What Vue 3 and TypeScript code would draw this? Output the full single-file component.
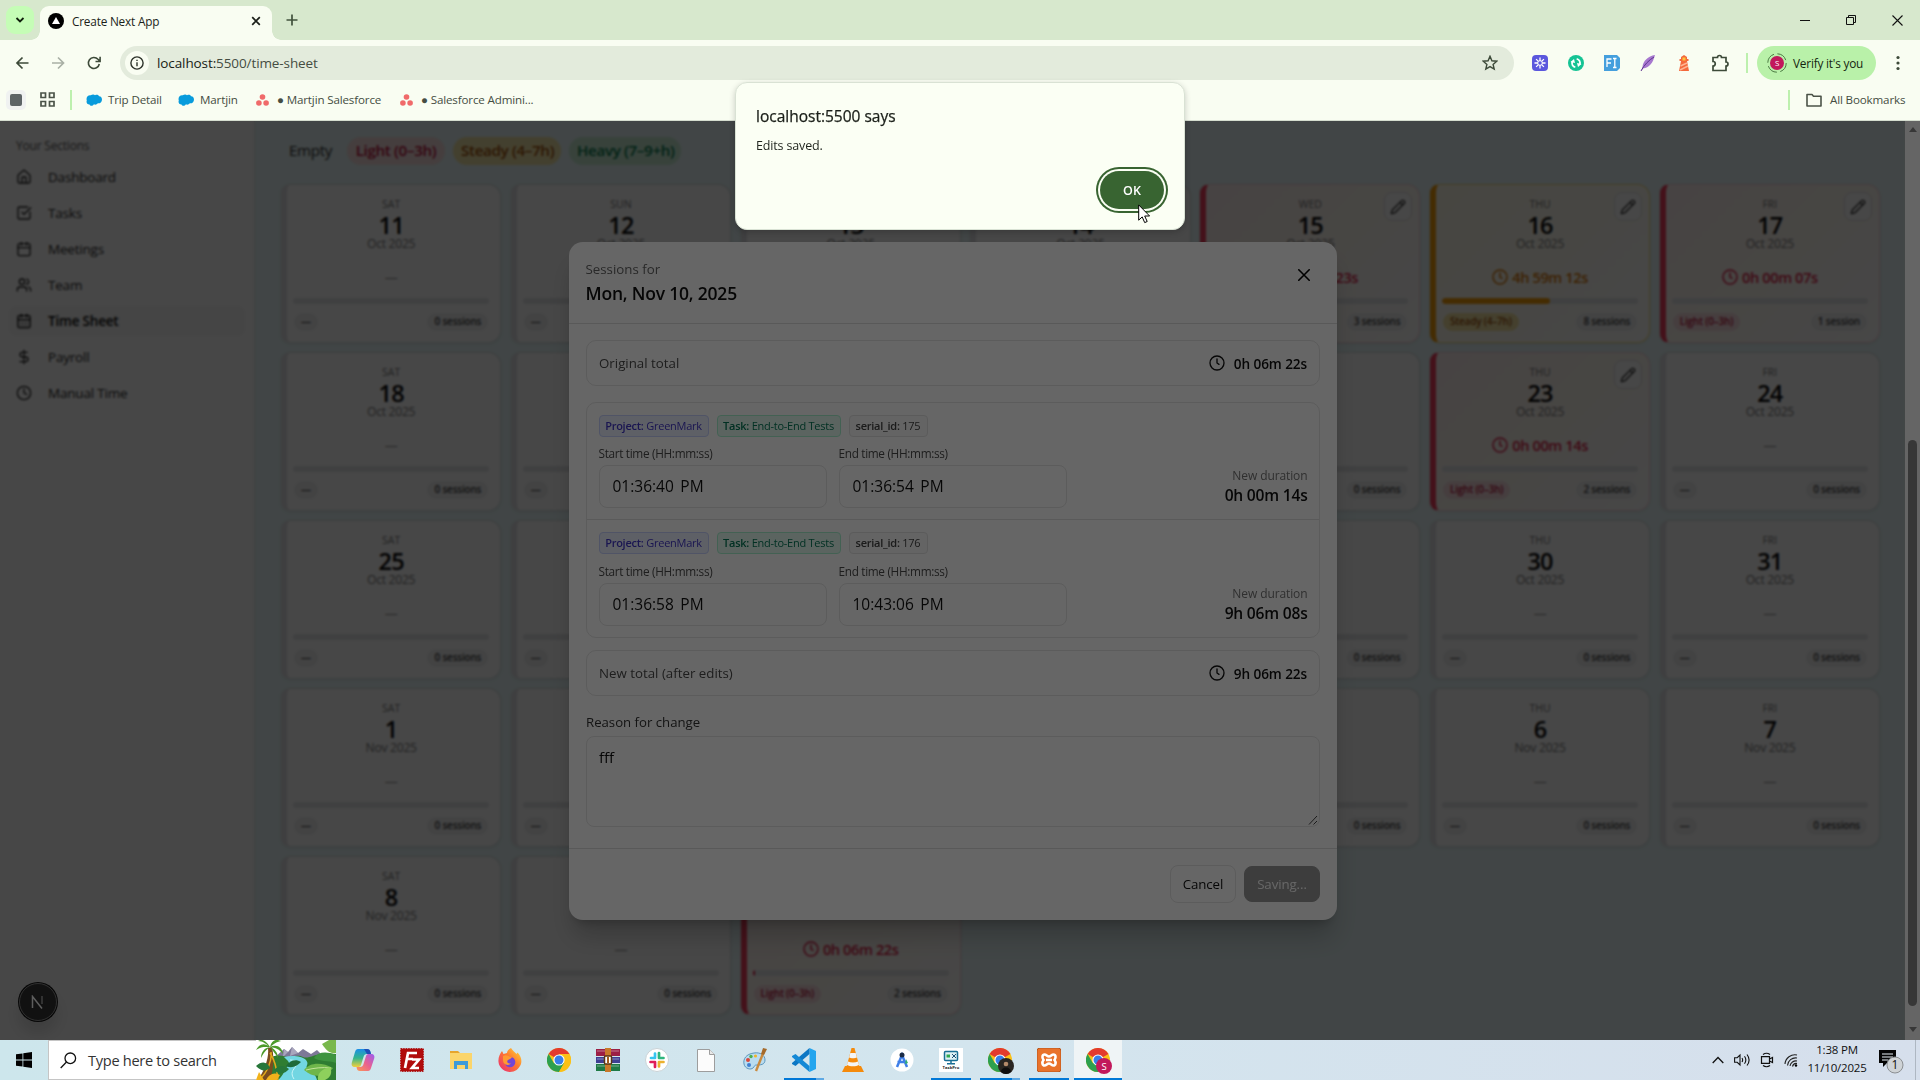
<script setup lang="ts">
type Level = 'empty' | 'light' | 'steady'
type Part = 'dow' | 'num' | 'mon' | 'total' | 'level' | 'sessions'
interface Day {
  dow: string
  num: number
  month: string
  level: Level
  total: string
  pct: number
  sessions: string
}

const names = ['SAT', 'SUN', 'MON', 'TUE', 'WED', 'THU', 'FRI']
const tracked: Record<number, Partial<Day>> = {
  4: { level: 'light', total: '0h 00m 23s', sessions: '3 sessions' },
  5: { level: 'steady', total: '4h 59m 12s', pct: 55, sessions: '8 sessions' },
  6: { level: 'light', total: '0h 00m 07s', sessions: '1 session' },
  12: { level: 'light', total: '0h 00m 14s', sessions: '2 sessions' },
  30: { level: 'light', total: '0h 06m 22s', pct: 1.2, sessions: '2 sessions' },
}
const days: Day[] = Array.from({ length: 31 }, (_, i) => ({
  dow: names[i % 7],
  num: i < 21 ? 11 + i : i - 20,
  month: i < 21 ? 'Oct 2025' : 'Nov 2025',
  level: 'empty' as Level,
  total: '',
  pct: 0,
  sessions: '0 sessions',
  ...tracked[i],
}))
const levelText: Record<Level, string> = { empty: '—', light: 'Light (0–3h)', steady: 'Steady (4–7h)' }

// While the sessions dialog is open, the parts of the grid behind it are skipped.
const shows = (i: number, part: Part): boolean => {
  const row = Math.floor(i / 7)
  const col = i % 7
  if (col < 1 || col > 4) return true
  if (row === 0) {
    if (col === 1) return ['dow', 'num', 'mon', 'level'].includes(part)
    if (col === 4) return part !== 'level'
    return part === 'num' || part === 'mon'
  }
  if (row === 4) return ['total', 'level', 'sessions'].includes(part)
  if (col === 1) return part === 'level'
  return col === 4 && part === 'sessions'
}

const nav = [
  { label: 'Dashboard', paths: ['M15 21v-8a1 1 0 0 0-1-1h-4a1 1 0 0 0-1 1v8', 'M3 10a2 2 0 0 1 .7-1.5l7-6a2 2 0 0 1 2.6 0l7 6A2 2 0 0 1 21 10v9a2 2 0 0 1-2 2H5a2 2 0 0 1-2-2z'] },
  { label: 'Tasks', paths: ['M21 10.5V19a2 2 0 0 1-2 2H5a2 2 0 0 1-2-2V5a2 2 0 0 1 2-2h12.5', 'm9 11 3 3L22 4'] },
  { label: 'Meetings', paths: ['M8 2v4M16 2v4M3 10h18', 'M5 4h14a2 2 0 0 1 2 2v14a2 2 0 0 1-2 2H5a2 2 0 0 1-2-2V6a2 2 0 0 1 2-2z'] },
  { label: 'Team', paths: ['M16 21v-2a4 4 0 0 0-4-4H6a4 4 0 0 0-4 4v2', 'M9 3a4 4 0 1 1 0 8 4 4 0 0 1 0-8z', 'M22 21v-2a4 4 0 0 0-3-3.87M16 3.13a4 4 0 0 1 0 7.75'] },
  { label: 'Time Sheet', active: true, paths: ['M8 2v4M16 2v4M3 10h18', 'M5 4h14a2 2 0 0 1 2 2v14a2 2 0 0 1-2 2H5a2 2 0 0 1-2-2V6a2 2 0 0 1 2-2z', 'M8 14h.01M12 14h.01M16 14h.01M8 18h.01M12 18h.01M16 18h.01'] },
  { label: 'Payroll', paths: ['M12 2v20', 'M17 5H9.5a3.5 3.5 0 0 0 0 7h5a3.5 3.5 0 0 1 0 7H6'] },
  { label: 'Manual Time', paths: ['M12 2a10 10 0 1 1 0 20 10 10 0 0 1 0-20z', 'M12 6v6l4 2'] },
]

const sessions = [
  { id: 175, start: '01:36:40', end: '01:36:54', dur: '0h 00m 14s' },
  { id: 176, start: '01:36:58', end: '10:43:06', dur: '9h 06m 08s' },
]
</script>

<template>
  <div class="screen">
    <div class="tabstrip">
      <div class="tabmenu"><svg width="10" height="8" viewBox="0 0 10 8"><path d="M1.5 2 5 5.5 8.500 2" fill="none" stroke="#10200c" stroke-width="1.8" /></svg></div>
      <div class="tab">
        <svg width="16" height="16" viewBox="0 0 16 16"><circle cx="8" cy="8" r="8" /><path d="M8 4l4 7H4z" fill="#fff" /></svg>
        <span class="tabtitle">Create Next App</span>
        <svg width="10" height="10" viewBox="0 0 10 10"><path d="M1.200 1.200l7.600 7.600M8.800 1.200 1.200 8.800" stroke="#1b1f19" stroke-width="1.700" /></svg>
      </div>
      <svg class="plus" width="12" height="12" viewBox="0 0 12 12"><path d="M6 .5v11M.5 6h11" stroke="#41513c" stroke-width="1.700" /></svg>
      <div class="winctl">
        <svg width="10" height="10" viewBox="0 0 10 10"><path d="M0 5.500h10" stroke="#111" /></svg>
        <svg width="10" height="10" viewBox="0 0 10 10"><path d="M.5 2.500h7v7h-7zM2.500 2.500v-2h7v7h-2" fill="none" stroke="#111" /></svg>
        <svg width="11" height="11" viewBox="0 0 11 11"><path d="M.5.5l10 10M10.500.5l-10 10" stroke="#111" stroke-width="1.100" /></svg>
      </div>
    </div>

    <div class="toolbar">
      <svg class="tb" width="14" height="14" viewBox="0 0 14 14"><path d="M13.500 7H2M7.500 1.500 2 7l5.500 5.500" fill="none" stroke="#3d4a39" stroke-width="1.700" /></svg>
      <svg class="tb" width="14" height="14" viewBox="0 0 14 14"><path d="M1 7h11.500M7 1.500 12.500 7 7 12.500" fill="none" stroke="#a9b0a5" stroke-width="1.700" /></svg>
      <svg class="tb" width="14" height="14" viewBox="0 0 14 14"><path d="M12.300 8A5.500 5.500 0 1 1 11 3.300L13 5.300M13.100.8v4.700H8.500" fill="none" stroke="#3d4a39" stroke-width="1.600" /></svg>
      <div class="omni">
        <div class="info"><svg width="14" height="14" viewBox="0 0 14 14"><circle cx="7" cy="7" r="6.100" fill="none" stroke="#2d332a" stroke-width="1.400" /><path d="M7 6.200v4M7 3.700v1.400" stroke="#2d332a" stroke-width="1.400" /></svg></div>
        <span class="url"><b>localhost:</b>5500/time-sheet</span>
        <svg width="16" height="16" viewBox="0 0 16 16"><path d="M8 1.300l1.900 4.500 4.900.4-3.700 3.200 1.100 4.700L8 11.600l-4.200 2.500 1.100-4.700L1.200 6.200l4.900-.4z" fill="none" stroke="#3d4a39" stroke-width="1.400" /></svg>
      </div>
      <div class="exts">
        <svg width="16" height="16" viewBox="0 0 16 16"><rect width="16" height="16" rx="4" fill="#5b57dd" /><g stroke="#fff" stroke-width="1.300"><path d="M8 2.500v11M2.500 8h11M4.100 4.100l7.800 7.800M11.900 4.100l-7.800 7.800" /></g><circle cx="8" cy="8" r="2.300" fill="#5b57dd" stroke="#fff" /></svg>
        <svg width="16" height="16" viewBox="0 0 16 16"><circle cx="8" cy="8" r="8" fill="#15c394" /><path d="M7.300 12.200A4.200 4.200 0 0 1 4.300 6.500M8.700 3.800a4.200 4.200 0 0 1 3 5.700" fill="none" stroke="#fff" stroke-width="1.800" /><path d="M2.500 7l3.500-3 1 4zM13.500 9l-3.500 3-1-4z" fill="#fff" /></svg>
        <svg width="16" height="16" viewBox="0 0 16 16"><path d="M0 0h13l3 3v10l-3 3H0z" fill="#459fdd" /><path d="M3 12V4h4.500M3 8h4M9 3.500h3.500M9 12.500h3.500M10.800 3.500v9" fill="none" stroke="#fff" stroke-width="1.300" /></svg>
        <svg width="16" height="16" viewBox="0 0 16 16"><path d="M15 0C8 1 3 6 2.500 12L1 16l2-2.500C9 13 13 8 15 0z" fill="#a778cf" /><path d="M1 16C4 10 9 5 14 2" stroke="#5f3590" fill="none" /></svg>
        <svg width="16" height="16" viewBox="0 0 16 16"><path d="M5 2l3-2 3 2v2h1.500v2H11l2 10H3l2-10H3.500V4H5z" fill="#f4693c" /><path d="M6.500 2.500h3v3h-3z" fill="#ffc63c" /><path d="M4.500 11l6.500-3M4 15l8-4" stroke="#ffb493" stroke-width="1.500" /></svg>
        <svg width="17" height="18" viewBox="0 0 17 18"><path d="M1 3.500h4.500a2 2 0 0 1 4 0H14V8a2 2 0 0 1 0 4v4.500H1V12a2 2 0 0 0 0-4.500z" fill="none" stroke="#3d4a39" stroke-width="1.700" /></svg>
      </div>
      <i class="vsep ext-sep"></i>
      <div class="verify">
        <svg width="20" height="20" viewBox="0 0 20 20"><circle cx="10" cy="10" r="9.200" fill="none" stroke="#4a7a42" stroke-dasharray="11 3.500" /><circle cx="10" cy="10" r="7" fill="#c2185b" /><text x="10" y="13" text-anchor="middle" font-size="8" fill="#fff" font-family="Open Sans, sans-serif">S</text></svg>
        <span>Verify it's you</span>
      </div>
      <svg class="dots" width="4" height="16" viewBox="0 0 4 16"><g fill="#3d4a39"><circle cx="2" cy="2.500" r="1.600" /><circle cx="2" cy="8" r="1.600" /><circle cx="2" cy="13.500" r="1.600" /></g></svg>
    </div>

    <div class="bookmarks">
      <div class="sq"><i></i></div>
      <svg class="apps" width="15" height="15" viewBox="0 0 15 15"><path d="M1 1h4.500v4.500H1zM9.500 1H14v4.500H9.500zM1 9.500h4.500V14H1zM9.500 9.500H14V14H9.500z" fill="none" stroke="#4b5348" stroke-width="1.700" /></svg>
      <i class="vsep bm-sep"></i>
      <div class="bm b1"><svg width="16" height="12" viewBox="0 0 16 12"><path d="M3.500 10.500C1 10.500 0 8.500.8 6.500-.3 3.500 2 .8 4.800 1.300 6 .3 8 0 9 1.300c2-1 3.500-.3 4 .9C15.500 2 16.500 5 15.700 7c-.6 2-2.400 2.700-4 2.200-1 1.500-2.600 1.800-3.800 1-1.200 2-3.700 2-4.400.3z" fill="#089bdc" /></svg><span>Trip Detail</span></div>
      <div class="bm b2"><svg width="16" height="12" viewBox="0 0 16 12"><path d="M3.500 10.500C1 10.500 0 8.500.8 6.500-.3 3.500 2 .8 4.800 1.300 6 .3 8 0 9 1.300c2-1 3.500-.3 4 .9C15.500 2 16.500 5 15.700 7c-.6 2-2.400 2.700-4 2.200-1 1.500-2.600 1.800-3.800 1-1.200 2-3.700 2-4.400.3z" fill="#089bdc" /></svg><span>Martjin</span></div>
      <div class="bm b3"><svg width="13" height="12" viewBox="0 0 13 12"><g fill="#f06a6a"><circle cx="6.500" cy="3" r="2.800" /><circle cx="2.900" cy="9" r="2.800" /><circle cx="10.100" cy="9" r="2.800" /></g></svg><span>● Martjin Salesforce</span></div>
      <div class="bm b4"><svg width="13" height="12" viewBox="0 0 13 12"><g fill="#f06a6a"><circle cx="6.500" cy="3" r="2.800" /><circle cx="2.900" cy="9" r="2.800" /><circle cx="10.100" cy="9" r="2.800" /></g></svg><span>● Salesforce Admini...</span></div>
      <i class="vsep all-sep"></i>
      <svg class="folder" width="16" height="14" viewBox="0 0 16 14"><path d="M1 1.500h5l1.500 1.700H15V13H1z" fill="none" stroke="#4b5348" stroke-width="1.600" stroke-linejoin="round" /></svg>
      <span class="alltext">All Bookmarks</span>
    </div>

    <div class="viewport">
      <div class="page">
        <aside>
          <div class="sechead">Your Sections</div>
          <div v-for="n in nav" :key="n.label" class="navitem" :class="{ active: n.active }">
            <svg width="16" height="16" viewBox="0 0 24 24" fill="none" stroke="currentColor" stroke-width="2" stroke-linecap="round" stroke-linejoin="round"><path v-for="p in n.paths" :key="p" :d="p" /></svg>
            <span>{{ n.label }}</span>
          </div>
        </aside>
        <main>
          <div class="legend">
            <span class="lg l-empty">Empty</span><span class="lg l-light">Light (0–3h)</span><span class="lg l-steady">Steady (4–7h)</span><span class="lg l-heavy">Heavy (7–9+h)</span>
          </div>
          <div class="grid">
            <div v-for="(d, i) in days" :key="i" class="card" :class="d.level">
              <div class="dow"><span v-if="shows(i, 'dow')">{{ d.dow }}</span></div>
              <div class="num"><span v-if="shows(i, 'num')">{{ d.num }}</span></div>
              <div class="mon"><span v-if="shows(i, 'mon')">{{ d.month }}</span></div>
              <div v-if="d.total" class="total">
                <svg width="16" height="16" viewBox="0 0 24 24" fill="none" stroke="currentColor" stroke-width="2.200" stroke-linecap="round"><circle cx="12" cy="12" r="10.500" /><path d="M12 6v6l3 2" /></svg>
                <span>{{ d.total }}</span>
              </div>
              <div v-else class="total none"><span v-if="shows(i, 'total')">—</span></div>
              <div class="bar"><i :style="{ width: d.pct + '%' }"></i></div>
              <div class="foot">
                <span v-if="shows(i, 'level')" class="pill lvl">{{ levelText[d.level] }}</span>
                <span v-if="shows(i, 'sessions')" class="pill count">{{ d.sessions }}</span>
              </div>
              <div v-if="d.total" class="edit"><svg width="16" height="16" viewBox="0 0 24 24" fill="none" stroke="#333" stroke-width="2" stroke-linejoin="round"><path d="M21.200 6.800a1 1 0 0 0-4-4L3.800 16.200a2 2 0 0 0-.5.8L2 21.400a.5.5 0 0 0 .6.6l4.400-1.300a2 2 0 0 0 .8-.5zM15 5l4 4" /></svg></div>
            </div>
          </div>
        </main>
      </div>
      <div class="scrim"></div>

      <section class="modal">
        <header>
          <div>
            <div class="m-sub">Sessions for</div>
            <div class="m-title">Mon, Nov 10, 2025</div>
          </div>
          <svg width="12" height="12" viewBox="0 0 12 12"><path d="M.8.8l10.400 10.400M11.200.8.8 11.200" stroke="#000" stroke-width="1.600" stroke-linecap="round" /></svg>
        </header>
        <div class="m-body">
          <div class="sumrow">
            <span>Original total</span>
            <b><svg width="16" height="16" viewBox="0 0 24 24" fill="none" stroke="currentColor" stroke-width="2" stroke-linecap="round"><circle cx="12" cy="12" r="10.500" /><path d="M12 6v6l3 2" /></svg><span>0h 06m 22s</span></b>
          </div>
          <div class="sessions">
            <div v-for="s in sessions" :key="s.id" class="session">
              <div class="chips">
                <span class="chip c-proj"><b>Project:</b> GreenMark</span>
                <span class="chip c-task"><b>Task:</b> End-to-End Tests</span>
                <span class="chip c-id"><b>serial_id:</b> {{ s.id }}</span>
              </div>
              <div class="fields">
                <div class="field"><label>Start time (HH:mm:ss)</label><div class="input">{{ s.start }} PM</div></div>
                <div class="field"><label>End time (HH:mm:ss)</label><div class="input">{{ s.end }} PM</div></div>
                <div class="dur"><span>New duration</span><b>{{ s.dur }}</b></div>
              </div>
            </div>
          </div>
          <div class="sumrow new">
            <span>New total (after edits)</span>
            <b><svg width="16" height="16" viewBox="0 0 24 24" fill="none" stroke="currentColor" stroke-width="2" stroke-linecap="round"><circle cx="12" cy="12" r="10.500" /><path d="M12 6v6l3 2" /></svg><span>9h 06m 22s</span></b>
          </div>
          <div class="reason">Reason for change</div>
          <div class="area">fff<svg width="10" height="10" viewBox="0 0 10 10"><path d="M1 9.500 9 1M5.500 9.500 9 6" stroke="#444" fill="none" /></svg></div>
        </div>
        <footer><span class="btn cancel">Cancel</span><span class="btn saving">Saving...</span></footer>
      </section>

      <div class="devbtn"><svg width="14" height="14" viewBox="0 0 14 14"><path d="M1.500 13V1.500L11 13.500" fill="none" stroke="#e8e8e8" stroke-width="1.500" /><path d="M11 1v8" stroke="#999" stroke-width="1.500" /></svg></div>
      <div class="scrollbar"><i class="up"></i><i class="thumb"></i><i class="down"></i></div>
      <div class="dim"></div>
    </div>

    <div class="alert">
      <div class="a-title">localhost:5500 says</div>
      <div class="a-text">Edits saved.</div>
      <div class="a-foot"><div class="ok">OK</div></div>
    </div>
    <svg class="cursor" width="13" height="20" viewBox="0 0 13 20"><path d="M.7.9v15.300l3.500-3.300 2.500 5.700 2.500-1.100-2.500-5.500h4.900z" fill="#fff" stroke="#000" stroke-width="1" /></svg>

    <div class="taskbar">
      <div class="start"><svg width="16" height="16" viewBox="0 0 16 16"><path d="M0 2.300 6.500 1.400V7.600H0zM7.300 1.300 16 0v7.600H7.300zM0 8.400h6.500v6.200L0 13.700zM7.300 8.400H16V16l-8.700-1.300z" /></svg></div>
      <div class="search">
        <svg width="17" height="17" viewBox="0 0 17 17"><circle cx="10.300" cy="6.300" r="5.300" fill="none" stroke="#111" stroke-width="1.300" /><path d="M6.500 10 .7 16" stroke="#111" stroke-width="1.300" /></svg>
        <span>Type here to search</span>
        <svg class="scene" width="80" height="40" viewBox="0 0 80 40">
          <rect width="80" height="40" fill="#fff" />
          <path d="M18 18 28 9l4 3 4-5 6 6 5-4 8 5 6-4 8 8v6H18z" fill="#7d7897" /><path d="M28 9l4 3-5 5zM36 7l6 6-8 3z" fill="#a9a6bd" />
          <path d="M14 18c8-5 15-1 18-1s10-3 15 0 14-6 33-3v26H8z" fill="#2f7d32" />
          <path d="M28 17c8-2 18-1 22 3 4 5-2 6 2 9s8 6 9 11H22c6-5 6-10 10-14 3-3 0-5-4-9z" fill="#72d6e2" /><path d="M34 20c6 0 9 2 6 6s-6 7-2 13" stroke="#c9f5f8" fill="none" />
          <path d="M2 40C10 28 13 16 12 8l4-1c3 14 0 24-1 33z" fill="#7a4c1f" /><path d="M3 40C12 32 16 20 15 12M22 40c-1-10-3-20-8-27" stroke="#e1a91c" stroke-width="1.500" fill="none" />
          <path d="M14 7C8 2 3 4 0 10c6-4 9-3 14-3zM14 7C9-1 5-1 2 1c5 0 8 3 12 6zM14 7c2-8 7-8 11-6-5 1-7 3-11 6zM14 7c7-3 12 0 13 7-4-5-7-6-13-7zM14 7C8 8 5 12 5 18c3-6 5-8 9-11zM14 7c5 2 8 6 8 11-3-5-5-7-8-11z" fill="#4c9a2a" />
          <path d="M30 26c4-6 10-7 15-4-4 4-9 7-15 4z" fill="#1f6a3a" /><path d="M0 26c6-6 12-4 14 2-5 4-9 3-14-2zM18 30c5-5 10-5 15-1-4 5-10 6-15 1z" fill="#27773a" />
          <path d="M48 30c6-8 18-8 29-2-7 9-19 11-29 2z" fill="#6fb64a" /><path d="M50 30c8-2 16-3 25-2" stroke="#c3e49a" fill="none" />
          <path d="M62 40c-1-6 3-11 12-13 3 6 0 11-5 13z" fill="#8ed05c" /><path d="M66 4c5 8 10 10 14 9V0h-7z" fill="#79b84c" /><path d="M58 18c4-6 12-7 22-3v8c-8-3-16-1-22-5z" fill="#3e9440" /><path d="M10 40c3-6 8-8 14-5l-3 5zM0 40l3-8 5 8z" fill="#f2b21b" />
        </svg>
      </div>
      <div class="apps-row">
        <div class="app"><svg width="24" height="24" viewBox="0 0 24 24"><defs><linearGradient id="ca" x1="0" y1="0" x2="0" y2="1"><stop offset="0" stop-color="#1b8ee8" /><stop offset=".5" stop-color="#33b58c" /><stop offset="1" stop-color="#f3cf3c" /></linearGradient><linearGradient id="cb" x1="1" y1="0" x2="0" y2="1"><stop offset="0" stop-color="#9a5cf2" /><stop offset=".5" stop-color="#e9618f" /><stop offset="1" stop-color="#fb9a52" /></linearGradient></defs><path d="M7 1h9c2 0 3 1 3.500 3L20 6h-4c-2 0-3 1-3.500 3L10 17c-.5 1.500-1.500 2-3 2H4c-3 0-4-2-3-5L4 4c.500-2 1.500-3 3-3z" fill="url(#ca)" /><path d="M17 23H9c-2 0-3-1-3.500-4H9c2 0 3-1 3.500-3L15 8c.5-1.500 1.500-2 3-2h2c3 0 4 2 3 5l-3 9c-.5 2-1.500 3-3 3z" fill="url(#cb)" /><path d="M13 1h3c2 0 3 1 3.500 3L20 6h-4z" fill="#1d4fb8" /></svg></div>
        <div class="app"><svg width="24" height="24" viewBox="0 0 24 24"><rect x=".7" y=".7" width="22.600" height="22.600" fill="#b00c0c" stroke="#a00" stroke-dasharray="1.500 1" /><path d="M5 20 8 5h9M7 11h6M12 11.500h7L12 20h7" fill="none" stroke="#fff" stroke-width="2.700" /></svg></div>
        <div class="app"><svg width="22" height="20" viewBox="0 0 22 20"><path d="M0 1h8l2 2h-1v5H0z" fill="#e6a52d" /><path d="M0 3h22v16H0z" fill="#fbd56b" /><path d="M4 19v-8h14v8h-3v-4H7v4z" fill="#3f9bd8" /></svg></div>
        <div class="app"><svg width="24" height="24" viewBox="0 0 24 24"><defs><linearGradient id="ff" x1="1" y1="0" x2="0" y2="1"><stop offset="0" stop-color="#ffde3b" /><stop offset=".45" stop-color="#ff7b2e" /><stop offset="1" stop-color="#e8257c" /></linearGradient></defs><path d="M13 0c2 3 4 4 5.500 6l1-1.500C23 8 24 12 23 16c-2 5-6 8-11 8S1 20 .5 14C0 9 2 6 4 3l1.500 3L9 5c0-2 2-4 4-5z" fill="url(#ff)" /><circle cx="12" cy="14" r="5.300" fill="#7346d6" /><path d="M5 8c4-2 6 1 9 1-1 2-3 2-4 3-2 2 0 4 3 3.500-3 3-8 1-8-3.500z" fill="#ff9a32" /></svg></div>
        <div class="app"><svg width="24" height="24" viewBox="0 0 24 24"><circle cx="12" cy="12" r="12" fill="#fbc116" /><path d="M12 12 1.600 6A12 12 0 0 1 22.400 6z" fill="#e33b2e" /><path d="M1.600 6A12 12 0 0 0 12 24l5.200-9L12 12 6.800 15z" fill="#2da04e" /><path d="M22.400 6H12v6l5.200 3L12 24A12 12 0 0 0 22.400 6z" fill="#fbc116" /><circle cx="12" cy="12" r="5.600" fill="#fff" /><circle cx="12" cy="12" r="4.500" fill="#377fe8" /></svg></div>
        <div class="app"><svg width="24" height="24" viewBox="0 0 24 24"><path d="M0 1h24v7H0z" fill="#9c1f45" /><path d="M0 9h24v6H0z" fill="#3e3f94" /><path d="M0 16h24v7H0z" fill="#1e7a45" /><path d="M1 3h22M1 11h22M1 18h22" stroke="#fff6" /><rect x="9" y="0" width="6" height="24" fill="#c9792b" /><rect x="8.500" y="8" width="7" height="8" rx="1" fill="#fff" stroke="#5b3514" stroke-width="1.500" /><path d="M12 9v6" stroke="#a35a1a" stroke-width="2" /></svg></div>
        <div class="app"><svg width="24" height="24" viewBox="0 0 24 24"><circle cx="12" cy="12" r="11.500" fill="#fff" stroke="#c9d2d6" /><g stroke-width="2.700" stroke-linecap="round"><path d="M10 5.500V10M6 10h4" stroke="#36c5f0" /><path d="M14 5v5M18.500 10H16" stroke="#2eb67d" /><path d="M14 14v4.500M14 14h4.500" stroke="#ecb22e" /><path d="M10 14v5M5.500 14H10" stroke="#e01e5a" /></g></svg></div>
        <div class="app"><svg width="18" height="23" viewBox="0 0 18 23"><path d="M.5.5h12l5 5v17H.5z" fill="#fcfcfc" stroke="#9d9d9d" /><path d="M12.500.5v5h5" fill="#e8e8e8" stroke="#9d9d9d" /></svg></div>
        <div class="app"><svg width="24" height="24" viewBox="0 0 24 24"><path d="M11 5C3 6 0 11 1 16s7 6 9 4 1-3 4-3 8 0 8-5-5-8-11-7z" fill="#b9dcf0" stroke="#5b96bd" /><circle cx="5" cy="12" r="2" fill="#d9483b" /><circle cx="8" cy="8.500" r="1.700" fill="#4caf50" /><circle cx="12.500" cy="8" r="1.600" fill="#f0b429" /><circle cx="6" cy="17" r="2" fill="#3f7fd0" /><path d="M21 3 13 23" stroke="#c98a3e" stroke-width="2.400" /><path d="M18 6l2-6 4 1-3 6z" fill="#a56a2a" /></svg></div>
        <div class="app on split"><svg width="24" height="24" viewBox="0 0 24 24"><path d="M17.500 0 24 3v18l-6.500 3z" fill="#23a5ee" /><path d="M17.500 0v6L3.500 18 0 16v-1z" fill="#0d77c4" /><path d="M17.500 24v-6L3.500 6 0 8v1z" fill="#1489d6" /></svg></div>
        <div class="app"><svg width="22" height="24" viewBox="0 0 22 24"><path d="M3 18h16l3 6H0z" fill="#f58a0b" /><path d="M9.500 0h3l5 19c-3 2.500-10 2.500-13 0z" fill="#f58a0b" /><path d="M8.300 5h5.400l1.200 4.500c-2 1-6 1-7.800 0zM6 13.500c3 1.300 7 1.300 10 0l1 3.500c-3 1.800-9 1.800-12 0z" fill="#f4f4f4" /></svg></div>
        <div class="app"><svg width="24" height="24" viewBox="0 0 24 24"><circle cx="12" cy="12" r="11.500" fill="#fff" /><path d="M7 19l5-12 5 12M7.500 14h9" fill="none" stroke="#3f7fe8" stroke-width="2.500" /><circle cx="12" cy="7" r="2.500" fill="#1b2b45" /><path d="M16 11l2 4-3 1z" fill="#37b26c" /></svg></div>
        <div class="app on"><svg width="24" height="24" viewBox="0 0 24 24"><rect width="24" height="24" fill="#fff" /><rect x="5.500" y="3.500" width="13" height="9" rx="1" fill="#dff1f5" stroke="#1b6f95" stroke-width="1.500" /><path d="M12 13v2.500M8 15.700h8" stroke="#1b6f95" stroke-width="1.500" /><path d="M7.500 8h3.500" stroke="#2fa84f" stroke-width="3" /><path d="M13 6l4 4M17 6l-4 4" stroke="#1b4f75" /><text x="12" y="21" text-anchor="middle" font-size="4.200" font-weight="700" fill="#222" font-family="Open Sans, sans-serif">TaskPro</text></svg></div>
        <div class="app on split"><svg class="badged" width="26" height="26" viewBox="0 0 26 26"><circle cx="12" cy="12" r="12" fill="#fbc116" /><path d="M12 12 1.600 6A12 12 0 0 1 22.400 6z" fill="#e33b2e" /><path d="M1.600 6A12 12 0 0 0 12 24l5.200-9L12 12 6.800 15z" fill="#2da04e" /><circle cx="12" cy="12" r="5.600" fill="#fff" /><circle cx="12" cy="12" r="4.500" fill="#377fe8" /><circle cx="18" cy="18" r="8" fill="#2a2622" /><path d="M13 24c0-6 10-6 10 0a8 8 0 0 1-10 0z" fill="#0f0e0e" /><circle cx="18" cy="16" r="2.300" fill="#b48a6a" /></svg></div>
        <div class="app on"><svg width="24" height="24" viewBox="0 0 24 24"><rect width="24" height="24" rx="3" fill="#e9722a" stroke="#b9541a" /><path d="M7.500 6.500c2 0 2.500 2 4.500 2s2.500-2 4.500-2 3 3 1 5.500c2 2.500 1 5.500-1 5.500s-2.500-2-4.500-2-2.500 2-4.500 2-3-3-1-5.500c-2-2.500-1-5.500 1-5.500zM9 12h6" fill="none" stroke="#fff" stroke-width="2.600" /></svg></div>
        <div class="app on current"><svg class="badged" width="26" height="26" viewBox="0 0 26 26"><circle cx="12" cy="12" r="12" fill="#fbc116" /><path d="M12 12 1.600 6A12 12 0 0 1 22.400 6z" fill="#e33b2e" /><path d="M1.600 6A12 12 0 0 0 12 24l5.200-9L12 12 6.800 15z" fill="#2da04e" /><circle cx="12" cy="12" r="5.600" fill="#fff" /><circle cx="12" cy="12" r="4.500" fill="#377fe8" /><circle cx="18" cy="18" r="8" fill="#c2185b" /><text x="18" y="21.500" text-anchor="middle" font-size="9.500" fill="#fff" font-family="Open Sans, sans-serif">S</text></svg></div>
      </div>
      <div class="tray">
        <svg width="12" height="8" viewBox="0 0 12 8"><path d="M.7 7 6 1.500 11.300 7" fill="none" stroke="#111" stroke-width="1.300" /></svg>
        <svg class="vol" width="17" height="14" viewBox="0 0 17 14"><path d="M.6 4.700h2.600L6 2v10L3.200 9.300H.6z" fill="none" stroke="#111" stroke-width="1.100" /><path d="M8 5q1.300 2 0 4M10.500 3.300q2.700 3.700 0 7.400M13 1.500q4.200 5.500 0 11" fill="none" stroke="#111" stroke-width="1.100" /></svg>
        <svg width="14" height="16" viewBox="0 0 14 16"><path d="M3 2.500q3.500-2.500 7 0M3 13.500q3.500 2.500 7 0M1.500 4.600h8v6.800h-8zM9.500 7l3-1.500v5l-3-1.500" fill="none" stroke="#111" stroke-width="1.200" /></svg>
        <svg width="14" height="14" viewBox="0 0 14 14"><path d="M1 11A10 10 0 0 1 13 2M3.500 12.500A8 8 0 0 1 13 5M6 13a6 6 0 0 1 7-5M8.500 13.500a4 4 0 0 1 4.500-3" fill="none" stroke="#222" stroke-width="1.100" /><circle cx="12" cy="12.500" r="1.200" /></svg>
        <div class="clock"><span>1:38 PM</span><span>11/10/2025</span></div>
        <svg class="notif" width="26" height="26" viewBox="0 0 26 26"><path d="M0 1h17v13H8l-4 4v-4H0z" fill="#050505" /><path d="M3 5h11M3 8h11M3 11h6" stroke="#e8f0f5" stroke-width="1.200" /><circle cx="16" cy="16" r="8" fill="#cfd3d6" stroke="#8b8f92" /><text x="16" y="20.300" text-anchor="middle" font-size="12" fill="#111" font-family="Open Sans, sans-serif">1</text></svg>
      </div>
    </div>
  </div>
</template>

<style>
html, body { margin: 0; background: #464646; overflow: hidden; }
</style>

<style scoped>
* { box-sizing: border-box; }
svg { display: block; flex: none; }
.screen { position: relative; width: 1920px; height: 1080px; overflow: hidden; display: flex; flex-direction: column; font-family: "Open Sans", "Noto Sans", sans-serif; color: #000; white-space: nowrap; }
.tabstrip { height: 40px; background: #d7e8cd; display: flex; align-items: flex-start; padding: 6px 0 0 6px; }
.tabmenu { width: 28px; height: 28px; border-radius: 9px; background: #c5fdb6; display: flex; align-items: center; justify-content: center; margin-right: 6px; padding-bottom: 1px; }
.tab { position: relative; width: 232px; height: 34px; background: #f9fdf2; border-radius: 9px 9px 0 0; display: flex; align-items: center; padding: 0 11px 5px 8px; }
.tab::before, .tab::after { content: ""; position: absolute; bottom: 0; width: 9px; height: 9px; }
.tab::before { left: -9px; background: radial-gradient(circle at 0 0, transparent 8.500px, #f9fdf2 9px); }
.tab::after { right: -9px; background: radial-gradient(circle at 100% 0, transparent 8.500px, #f9fdf2 9px); }
.tabtitle { flex: 1; margin-left: 8px; font-size: 11.800px; letter-spacing: -0.2px; color: #1b1f19; }
.plus { margin: 8px 0 0 14px; }
.winctl { margin: 9px 17px 0 auto; display: flex; gap: 36px; }
.toolbar { height: 44px; background: #f9fdf2; display: flex; align-items: center; padding: 2px 0 0 15px; }
.tb { margin-right: 22px; }
.omni { margin-left: -3px; width: 1394px; height: 34px; border-radius: 17px; background: #e3ebdc; display: flex; align-items: center; padding: 0 16px 0 5px; }
.info { width: 24px; height: 24px; border-radius: 12px; background: #f9fdf2; display: flex; align-items: center; justify-content: center; }
.url { flex: 1; margin-left: 8px; font-size: 13.500px; letter-spacing: -0.1px; color: #454d42; }
.url b { font-weight: 400; color: #171c15; }
.exts { display: flex; gap: 20px; margin-left: 18px; align-items: center; }
.vsep { display: block; width: 2px; height: 16px; background: #bdf0ae; }
.ext-sep { margin-left: 17px; height: 20px; }
.verify { margin-left: 9px; width: 119px; height: 34px; border-radius: 17px; background: #b9f1a9; display: flex; align-items: center; padding-left: 10px; gap: 6px; font-size: 11.800px; letter-spacing: -0.2px; color: #14250f; }
.dots { margin-left: 20px; }
.bookmarks { height: 37px; background: #f9fdf2; border-bottom: 1px solid #d5ddcf; display: flex; align-items: center; padding: 0 14px 5px 6px; font-size: 11.600px; color: #454d42; letter-spacing: -0.15px; }
.sq { width: 20px; height: 20px; border-radius: 5px; background: #f0f2f1; display: flex; align-items: center; justify-content: center; }
.sq i { width: 12px; height: 12px; border-radius: 2px; background: #5d6466; }
.apps { margin-left: 14px; }
.bm-sep { margin-left: 15px; height: 20px; }
.bm { display: flex; align-items: center; gap: 6px; flex: none; }
.b1 { margin-left: 14px; width: 92px; }
.b2 { width: 78px; }
.b3, .b4 { gap: 8px; }
.b3 { width: 144px; }
.all-sep { margin-left: auto; height: 20px; }
.folder { margin: 0 8px 0 16px; }
.alltext { width: 76px; }
.viewport { position: relative; height: 919px; overflow: hidden; background: #fff; }
.page { height: 919px; display: flex; }
aside { width: 255px; background: #fff; border-right: 1px solid #e2e8e8; padding: 15px 9px 0; }
.sechead { height: 20px; line-height: 20px; margin-bottom: 6px; padding-left: 7px; font-size: 12px; letter-spacing: -0.2px; color: #5c5c5c; }
.navitem { height: 30px; margin-bottom: 6px; border-radius: 8px; display: flex; align-items: center; padding-left: 7px; gap: 16px; font-size: 13.500px; color: #2c2c2c; letter-spacing: -0.2px; }
.navitem.active { background: #f6f6f6; font-weight: 600; color: #111; }
main { width: 1650px; background: #e8f8f9; padding: 16px 25px 0 26px; }
.legend { display: flex; gap: 8px; height: 28px; margin-bottom: 19px; }
.lg { height: 28px; line-height: 27px; border-radius: 14px; font-size: 15.200px; font-weight: 600; padding: 0 8px; text-align: center; letter-spacing: -0.35px; }
.l-empty { width: 58px; color: #333; font-weight: 500; }
.l-light { width: 98px; background: #f7e0e0; color: #be123c; }
.l-steady { width: 108px; background: #f3e6a8; color: #a1520c; }
.l-heavy { width: 112px; background: #c9eed6; color: #067a4c; }
.grid { display: grid; grid-template-columns: repeat(7, 1fr); gap: 9px 9.500px; }
.card { position: relative; height: 159px; border: 1px solid #dbe1e3; border-left: 6px solid #e2e2e6; border-radius: 9px 13px 13px 9px; background: #fff; padding: 10px 11px 0 6px; text-align: center; box-shadow: 0 1px 3px #0001; }
.card.light { background: linear-gradient(135deg, #fff2f1, #fffaf2 50%, #fff); border-color: #fbd5dc; border-left-color: #f43f5e; }
.card.steady { background: linear-gradient(135deg, #fffbea, #fffdf2 50%, #fff); border-color: #fbe38a; border-left-color: #f59e0b; }
.dow { height: 18px; line-height: 18px; font-size: 10.500px; color: #7c7c7c; }
.num { height: 24px; line-height: 24px; font-size: 23.500px; font-weight: 600; letter-spacing: -0.8px; color: #0a0a0a; }
.mon { height: 14px; line-height: 14px; font-size: 12.200px; color: #7c7c7c; letter-spacing: -0.3px; }
.total { height: 20px; margin: 16px 0 11px; display: flex; align-items: center; justify-content: center; gap: 4px; font-size: 14.600px; font-weight: 600; letter-spacing: -0.4px; }
.none { font-size: 13px; font-weight: 400; color: #8c8c8c; }
.light .total { color: #e11d48; }
.steady .total { color: #d97706; }
.bar { height: 6px; border-radius: 3px; background: #e5e7e9; overflow: hidden; }
.bar i { display: block; height: 6px; border-radius: 3px; }
.light .bar i { background: #e11d48; }
.steady .bar i { background: #f59e0b; }
.foot { display: flex; margin-top: 9px; padding: 0 1px; }
.count { margin-left: auto; }
.pill { height: 18px; line-height: 17px; border-radius: 9px; padding: 0 7px; background: #f0f1f2; font-size: 10px; font-weight: 600; color: #444; letter-spacing: -0.2px; }
.light .lvl { background: #fbdfe2; color: #be123c; }
.steady .lvl { background: #f6e6a5; color: #a1520c; }
.edit { position: absolute; right: 7px; top: 7px; width: 28px; height: 29px; border: 1px solid #dfdfdf; border-radius: 8px; background: #fff; display: flex; align-items: center; justify-content: center; }
.scrim { position: absolute; inset: 0; background: rgba(0, 0, 0, 0.3); backdrop-filter: blur(1px); }
.modal { position: absolute; left: 569px; top: 121px; width: 768px; height: 678px; background: #fff; border-radius: 14px; box-shadow: 0 20px 25px -5px #0003, 0 8px 10px -6px #0003; display: flex; flex-direction: column; }
header { height: 82px; border-bottom: 1px solid #dedede; display: flex; justify-content: space-between; padding: 16px 27px 0 16.500px; }
header > svg { margin-top: 11px; }
.m-sub { height: 22px; line-height: 22px; font-size: 13.300px; color: #666; }
.m-title { height: 27px; line-height: 27px; font-size: 17.500px; font-weight: 600; letter-spacing: -0.2px; color: #111; }
.m-body { padding: 16px 17px 0 17px; flex: 1; }
.sumrow { height: 46px; border: 1px solid #e6e6e6; border-radius: 10px; display: flex; align-items: center; justify-content: space-between; padding: 0 12px; font-size: 13.300px; color: #4c4c4c; }
.sumrow b { display: flex; gap: 9px; font-size: 13.600px; font-weight: 600; color: #111; letter-spacing: -0.1px; }
.sumrow b svg { margin-top: 1px; }
.sessions { border: 1px solid #e6e6e6; border-radius: 10px; margin: 16px 0 12px; height: 236px; }
.session { height: 116px; padding: 12px 11.500px 0; }
.session + .session { border-top: 1px solid #e0e0e0; }
.chips { display: flex; gap: 8px; }
.chip { height: 22px; line-height: 20px; border: 1px solid; border-radius: 4px; text-align: center; font-size: 11px; letter-spacing: -0.25px; }
.chip b { font-weight: 600; }
.c-proj { width: 110px; color: #4338ca; background: #eaefff; border-color: #c7d2fe; }
.c-task { width: 124px; color: #047857; background: #e4fbf0; border-color: #a7f3d0; }
.c-id { width: 79px; color: #444; background: #fafafa; border-color: #e4e4e4; }
.fields { display: flex; gap: 12px; margin-top: 6px; }
.session + .session .fields { margin-top: 7px; }
.field label { display: block; height: 20px; line-height: 20px; font-size: 11.800px; letter-spacing: -0.33px; color: #4c4c4c; }
.input { width: 228px; height: 43px; line-height: 41px; border: 1px solid #e6e6e6; border-radius: 8px; padding-left: 13px; font-size: 15.500px; word-spacing: 2.500px; color: #111; margin-top: 2px; }
.dur { margin-left: auto; display: flex; flex-direction: column; align-items: flex-end; padding-top: 23px; }
.dur span { height: 19px; line-height: 19px; font-size: 12px; letter-spacing: -0.1px; color: #777; }
.dur b { height: 20px; line-height: 20px; font-size: 15.600px; font-weight: 600; letter-spacing: -0.22px; color: #111; }
.reason { height: 22px; line-height: 22px; margin: 15px 0 3px; font-size: 13.200px; color: #333; }
.area { position: relative; height: 91px; border: 1px solid #e6e6e6; border-radius: 8px; padding: 9px 12px; font-size: 15px; line-height: 22px; color: #111; }
.area svg { position: absolute; right: 1px; bottom: 1px; }
footer { height: 72px; border-top: 1px solid #dedede; display: flex; justify-content: flex-end; gap: 8px; padding: 16px 17px 0 0; align-items: flex-start; }
.btn { height: 38px; line-height: 36px; border: 1px solid #e6e6e6; border-radius: 8px; width: 66px; text-align: center; font-size: 13.300px; letter-spacing: -0.1px; color: #111; }
.saving { width: 76px; margin-top: 1px; height: 36px; line-height: 34px; background: #9a9a9a; border-color: #9a9a9a; color: #fff; }
.devbtn { position: absolute; left: 19px; top: 862px; width: 38px; height: 38px; border-radius: 19px; background: #2c2c2c; border: 1px solid #777; box-shadow: 0 0 0 1px #111, 0 12px 16px #0002; display: flex; align-items: center; justify-content: center; }
.scrollbar { position: absolute; right: 0; top: 0; width: 15px; height: 919px; background: #fcfcfc; display: flex; flex-direction: column; align-items: center; }
.up { margin-top: 6px; border: 4.500px solid transparent; border-top: 0; border-bottom: 5px solid #8b8b8b; }
.thumb { margin-top: 308px; width: 9px; height: 566px; border-radius: 4.500px; background: #8b8b8b; }
.down { margin-top: 21px; border: 4.500px solid transparent; border-bottom: 0; border-top: 5px solid #8b8b8b; }
.dim { position: absolute; inset: 0; background: rgba(0, 0, 0, 0.6); }
.alert { position: absolute; left: 735px; top: 82px; width: 450px; height: 148px; border-radius: 12px; background: #fbfff4; border: 1px solid #d9e2d4; box-shadow: 0 2px 6px #0003; padding: 20px 20px 0 20px; z-index: 2; }
.a-title { height: 26px; line-height: 26px; font-size: 15.500px; font-weight: 500; color: #1a1f18; -webkit-text-stroke: 0.25px #1a1f18; }
.a-text { height: 20px; line-height: 20px; margin-top: 7px; font-size: 12.500px; letter-spacing: -0.15px; color: #1f241d; }
.a-foot { display: flex; justify-content: flex-end; margin-top: 15px; }
.ok { width: 64px; height: 38px; border-radius: 19px; background: #386431; color: #fff; font-size: 12.500px; font-weight: 600; line-height: 39px; text-align: center; box-shadow: 0 0 0 2px #fbfff4, 0 0 0 4px #386431; }
.cursor { position: absolute; left: 1138px; top: 204px; z-index: 3; }
.taskbar { height: 40px; display: flex; background: linear-gradient(90deg, #cde6ec, #d3e5ee 50%, #d6dfec); }
.start { width: 48px; display: flex; align-items: center; justify-content: center; }
.search { width: 288px; background: #fff; border: 1px solid #c5c5c5; border-right: 0; display: flex; align-items: center; padding-left: 11px; }
.search span { flex: 1; margin-left: 11px; font-size: 14.600px; letter-spacing: -0.3px; color: #333; }
.apps-row { display: flex; margin-left: 3px; gap: 1.010px; }
.app { position: relative; width: 48px; height: 40px; display: flex; align-items: center; justify-content: center; }
.app.on::after { content: ""; position: absolute; left: 4px; right: 4px; bottom: 0; height: 2px; background: #0078d7; }
.app.split::after { background: linear-gradient(90deg, #0078d7 80%, #5fa9e4 80%); }
.app.current { background: #eff4f6; }
.app.current::after { left: 0; right: 0; }
.badged { margin: 1px 0 0 2px; }
.tray { margin-left: auto; display: flex; align-items: center; border-right: 1px solid #aeb7c2; margin-right: 4px; }
.tray > svg { margin-right: 10px; }
.tray > .vol { margin-right: 9px; }
.clock { width: 58px; height: 40px; display: flex; flex-direction: column; align-items: center; font-size: 11.500px; line-height: 18px; padding-top: 1px; letter-spacing: -0.2px; color: #111; }
.tray > .notif { margin: 4px 10px 0 13px; }
</style>
